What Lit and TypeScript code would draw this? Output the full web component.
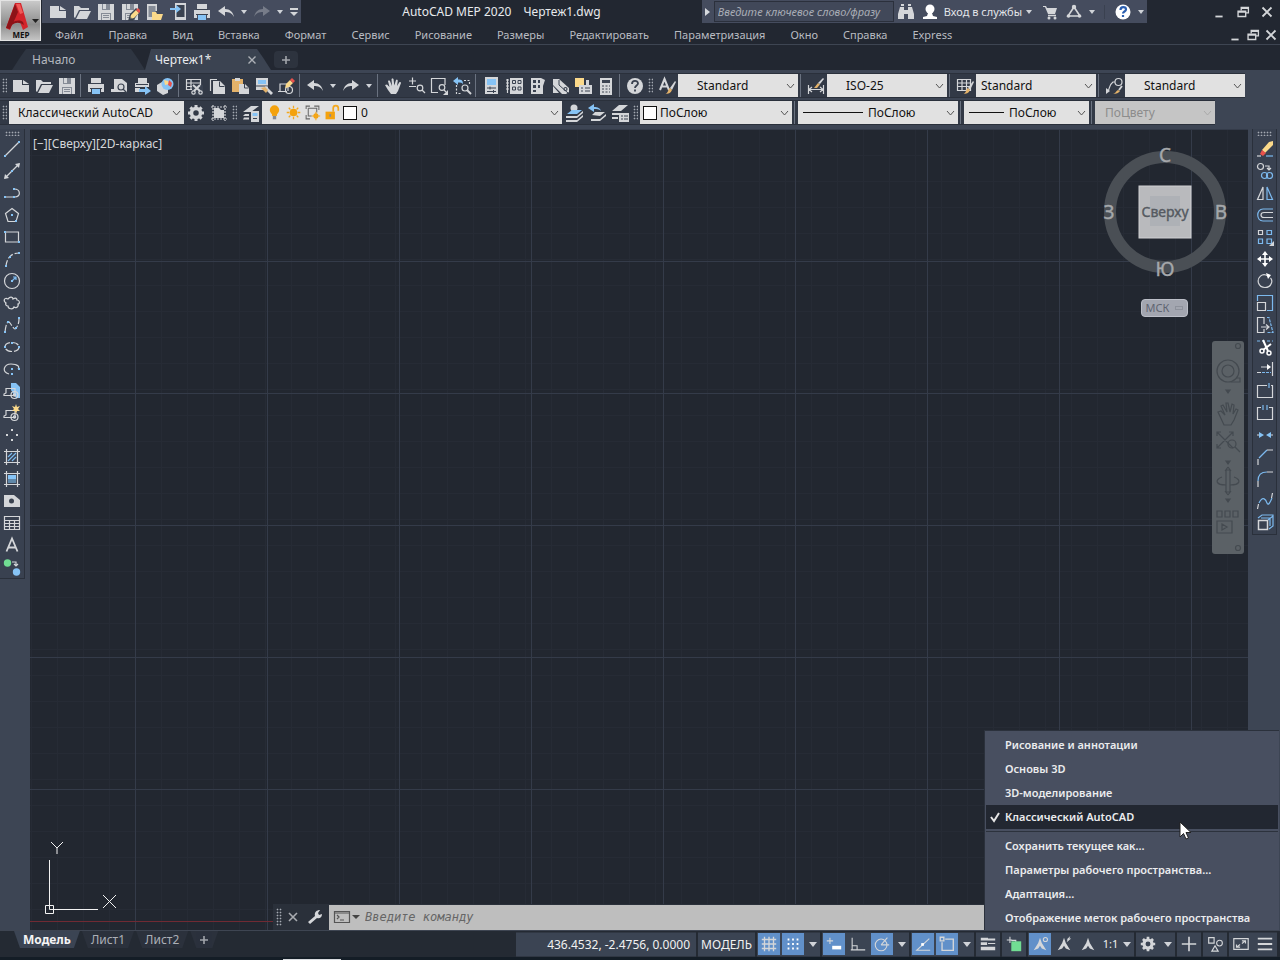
import { LitElement, html, css, svg, nothing, SVGTemplateResult } from "lit";
import { customElement, property } from "lit/decorators.js";
import { classMap } from "lit/directives/class-map.js";

const page = svg`<path class="f" d="M2 4h9v5h7v7H2z"/><path class="f" d="M12 4l6 4h-6z"/>`;
const folder = svg`<path class="f" d="M2 4h5l2 2h8v2h-1V8H7l-4 8-1-1z"/><path class="f" d="M8 9h11l-4 8H4z"/>`;
const floppy = svg`<path class="f" d="M2 2h16v16H2z"/><path class="m" d="M6 2h8v6H6zM5 11h10v7H5z"/><path class="f" d="M7 2h3v5H7zM6 12h8v6H6z"/><path class="d" d="M7 13.500h6M7 15.500h6"/>`;
const pencil = svg`<path class="y" d="M10 17l1-4 5-5 3 3-5 5z"/><path class="r" d="M16 8l2-2 3 3-2 2z"/><path class="k" d="M10 17l.6-2 1.400 1.400z"/>`;
const printer = svg`<path class="f" d="M5 2h10v5H5zM2 8h16v8h-3v-3H5v3H2z"/><path class="k" d="M4 7h12v1H4zM4 12h12v1H4z"/><path class="bf" d="M6 13h8v5H6z"/>`;
const brush = svg`<path class="f" d="M13 12l5-7 1 1-4 8z"/><path class="t" d="M8 18c3 0 3-5 5-6l2 2c-1 3-4 4-7 4z"/>`;
const gear = svg`<circle cx="10" cy="10" r="4.500" stroke-width="3.500"/><path stroke-width="3" d="M10 2v3M10 15v3M2 10h3M15 10h3M4.400 4.400l2 2M13.600 13.600l2 2M4.400 15.600l2-2M13.600 6.400l2-2"/>`;
const layers = svg`<path class="f" d="M2 13h10l6-4h-8zM2 9h10l6-4h-8z"/><path d="M2 16.500h10l5-4"/>`;
const hand = svg`<path class="f" d="M2 9l2-.5L6.500 11 5 5l1-.7L7 5l2 5-.5-7 1-.8 1 .8.8 6.500L13 4l1-.4.8 1L14 10l2.500-4 1 0 .5 1-3 8-2 3H8l-3-4z"/>`;
const block = svg`<path d="M4 7.500h9v7H2V13l2-1z"/><circle cx="12.500" cy="14" r="3.500"/><circle cx="12.500" cy="14" r="1.200"/>`;
const peak = svg`<path class="f" d="M10 3l2 6 5 8-5-2-2-3-2 3-5 2 5-8z"/>`;
const magnifier = svg`<circle cx="13" cy="12" r="3"/><path stroke-width="2" d="M15 14l4 4"/>`;

const ICONS: Record<string, SVGTemplateResult> = {
  page, folder, floppy, printer, gear, hand, peak, layers,
  saveAs: svg`${floppy}<path class="k" d="M8 19l2-7 6-6 4 3-7 10z"/>${pencil}`,
  openMobile: svg`<path class="f" d="M3 2h10v7h-3v9H3z"/><path class="m" d="M4.500 4h7v6h-3v5h-4z"/><path class="y" d="M8 10h4l1 2h6l-2 6H8z"/>`,
  saveMobile: svg`<path class="f" d="M7 1h11v17H7z"/><path class="k" d="M8.500 3h8v12h-8z"/><path class="bf" d="M2 6h6V3l5 4-5 4V8H2z"/>`,
  undo: svg`<path class="f" d="M2 9l7-5v3c5 0 8 3 9 8-2-4-5-5-9-5v4z"/>`,
  redo: svg`<path class="f" d="M18 9l-7-5v3c-5 0-8 3-9 8 2-4 5-5 9-5v4z"/>`,
  customize: svg`<path class="f" d="M6 6h8v2H6zM6 10h8l-4 4z"/>`,
  preview: svg`<path class="f" d="M5 3h8l5 4v9H5z"/><path class="f" d="M2 13h5v3H2z"/><circle class="kk" cx="12" cy="11" r="3"/><path class="kk" d="M14 13l4 4"/>`,
  publish: svg`<path class="f" d="M6 2h9v5H6zM3 7h14v4H3zM3 12h5v4H3z"/><path class="kk" d="M4 8.500h12" stroke-width="1"/><path class="bf" d="M7 13h6v-3l6 5-6 4v-3H7z"/>`,
  globe: svg`<path class="f" d="M2 9l5-3 6 3v8l-5 2-6-4z"/><circle class="bf" cx="12.500" cy="8" r="6"/><path class="y" d="M9 4l4 1 1 3-4 1z"/><path class="r" d="M14 4l3 3-1 4-3-2z"/>`,
  cut: svg`<path d="M2.500 3.500h14v10h-14zM2 7h14M2 10.500h10M7 3v11"/><path class="k" d="M8 9h11v10H8z"/><path class="l" d="M9 9l7 6M16 9l-6 6"/><circle cx="9.500" cy="16.500" r="1.700"/><circle cx="16.500" cy="16.500" r="1.700"/>`,
  copyClip: svg`<path d="M3.500 15V3.500H10"/><path class="f" d="M6 5h7l5 5v8H6z"/><path class="kk" d="M12.500 5.500v5h5" stroke-width="1"/>`,
  paste: svg`<path class="t" d="M2 3h11v5H9v8H2z"/><path class="f" d="M5 2h5v3H5zM9 8h6l4 4v6H9z"/><path class="kk" d="M14.500 8v4h4" stroke-width="1"/>`,
  match: svg`<path class="f" d="M3 2h12v12H3z"/><path class="bf" d="M5 4h8v4H5z"/><path class="kk" d="M3 10h12" stroke-width="1"/><path class="f" d="M11 12l2-2 7 7-2 2z"/><path class="t" d="M8 12l4-1 3 3-2 3z"/>`,
  blockEdit: svg`<path d="M2 15.500h9M4 15V8h8v7"/><circle cx="13" cy="14" r="3.500"/><path class="y" d="M9 12l1-4 4-4 3 3-4 4z"/><path class="r" d="M14 4l2-2 3 3-2 2z"/>`,
  zoom: svg`<path d="M3 5h7M6.500 1.500v7M3 10.500h7"/><circle cx="14" cy="12" r="2.800"/><path d="M16 14l3 3"/>`,
  zoomWindow: svg`<path d="M16 9V2.500H2.500v14H9"/><circle cx="13" cy="11.500" r="2.800"/><path d="M15 14l2 2"/><path class="f" d="M19 14v5h-5z"/>`,
  zoomPrev: svg`<path stroke-dasharray="2 1.500" d="M17.500 8V4.500H12M4.500 9v8.500H10"/><path class="bf" d="M1 5l5-4v2.500c4 0 5 1 5 5-1-2-2-2-5-2V9z"/>${magnifier}`,
  properties: svg`<path class="f" d="M4 1h13v17H4z"/><path class="bf" d="M6 3h9v6H6z"/><path class="kk" d="M6 12h9M6 15.500h9M9 10.500v3M12.500 14v3" stroke-width="1"/>`,
  design: svg`<path d="M3.500 3v14M2 4h3M2 7h3M2 10h3M2 13h3"/><path class="f" d="M6 2h13v16H6z"/><path class="kk" d="M8.500 4.500h3v3h-3zM14 4.500h3v3h-3zM8.500 11h3v3h-3zM14 11h3v3h-3z" stroke-width="1"/>`,
  palettes: svg`<path class="f" d="M4 2h10v16H4zM14 2l4 2-2 6v8h-2z"/><path class="k" d="M6 4h3v3H6zM11 4h2v3h-2zM6 9h3v3H6zM11 9h2v3h-2zM6 14h3v2H6z"/>`,
  sheets: svg`<path class="f" d="M3 3h6L19 12v4l-3 2h-4L3 9z"/><path class="f" d="M3 10l6 7H3z"/><path class="kk" d="M9 4v5l9 8" stroke-width="1"/><circle class="kk" cx="15.500" cy="13" r="1.500"/>`,
  markup: svg`<path class="y" d="M2 2h9v9H2z"/><path class="f" d="M6 9h13v9H6zM13 4h3v5h-3z"/><path class="kk" d="M8 12h2M12 12h5M8 15h2M12 15h5" stroke-width="1"/>`,
  calc: svg`<path class="f" d="M4 2h12v17H4z"/><path class="k" d="M6 4h8v3H6z"/><path class="kk" stroke-dasharray="2 1.500" d="M6 10h8M6 13h8M6 16h8"/>`,
  help: svg`<circle class="f" cx="10" cy="10" r="8"/><path class="kk" stroke-width="1.800" d="M7 8c0-4 6-4 6-.5 0 2-3 2-3 4.500M10 13.500v2"/>`,
  helpBlue: svg`<circle class="w" cx="10" cy="10" r="7.500"/><path stroke="#2c5fb0" stroke-width="2.200" d="M7.500 8c0-4 5.500-3.500 5.500-.5 0 2-3 2-3 4M10 13v2"/>`,
  textStyle: svg`<path stroke-width="2" d="M3 14L7.500 3 12 14M4.500 10.500h6"/>${brush}`,
  dimStyle: svg`<path d="M2.500 9v9M17.500 9v9M3 13.500h14M6 11l-3 2.500L6 16M14 11l3 2.500-3 2.500"/><path class="t" d="M8 12l4-5 2 1.500-3 3.500z"/><path class="f" d="M12 7l5-5 1 1-4 5z"/>`,
  tableStyle: svg`<path d="M2.500 3.500h13v11h-13zM2 7h14M2 10.500h14M7 4v11M11.500 4v11"/>${brush}`,
  leaderStyle: svg`<circle cx="14.500" cy="6" r="3.500"/><path d="M11 6H9c-4 3-3 6-5 9"/><path class="f" d="M2 18l0-6 4 3z"/><path class="t" d="M9 18c2 0 3-3 5-4l2 1c-1 2-4 3-7 3z"/><path stroke-width="1.800" d="M15 14l3-4"/>`,
  gridSet: svg`<path stroke-dasharray="2 1" d="M4 2v16M16 2v16M2 4h16M2 16h16"/><path class="f" d="M5 5h5l2 2h3v8H5z"/>`,
  layerProps: svg`<path class="f" d="M2 9h8l8-6h-8zM2 13h6v-2H4zM2 16.500h6v-2H3z"/><path class="f" d="M10 8h8v11h-8z"/><path class="bf" d="M11.500 10h5v3h-5z"/><path class="kk" d="M12 15.500h4" stroke-width="1"/>`,
  layerCurrent: svg`<circle class="f" cx="10" cy="5" r="3.500"/><path class="bf" d="M3 11l5-4h10l-5 4z"/><path class="f" d="M2 13h11l6-5v2l-6 5H2zM2 17h11l6-5v2l-6 5H2z"/>`,
  layerPrev: svg`<path class="bf" d="M1 5l6-4v3c4 0 6 1 7 4-2-2-4-2-7-2v3z"/><path class="f" d="M5 12l3-3h10l-5 4zM4 16h9l6-5v2l-6 5H4z"/>`,
  layerState: svg`<path class="f" d="M2 8h9l7-6h-9zM2 12h7v-2H2zM2 16h6v-2H2z"/><path class="f" d="M9 10h10v9H9z"/><path class="kk" d="M11 13h2M14 13h4M11 16h2M14 16h4" stroke-width="1"/>`,
  bulb: svg`<circle class="o" cx="10" cy="7" r="5.500"/><path class="o" d="M7 9h6v5H7z"/><path class="m" d="M8 14h4v4H8z"/>`,
  sun: svg`<circle class="o" cx="10" cy="10" r="4.500"/><path stroke="#f4a81d" stroke-width="1.500" d="M10 2v3M10 15v3M2 10h3M15 10h3M4.400 4.400l2 2M13.600 13.600l2 2M4.400 15.600l2-2M13.600 6.400l2-2"/>`,
  freeze: svg`<path stroke="#666" d="M2.500 6V2.500H7M12 2.500h5.500V7M2.500 13v4.500H7M5 5h10v5M5 5v9h4"/><circle class="o" cx="14" cy="14" r="3"/><path stroke="#f4a81d" d="M14 9v10M9 14h10"/>`,
  lock: svg`<path class="o" d="M3 9h11v9H3z"/><path stroke="#f4a81d" stroke-width="2" d="M12 9V5c0-4 6-4 6 0v3"/><path class="m" d="M7.500 12h2v3h-2z"/>`,
  binoculars: svg`<path class="f" d="M4 5h4v3h4V5h4l2 7v5h-6v-5H8v5H2v-5zM5 2h3v2H5zM12 2h3v2h-3z"/>`,
  user: svg`<circle class="w" cx="10" cy="7" r="4.500"/><path class="w" d="M8 11h4l1 3 4 1v2H3v-2l4-1z"/>`,
  cart: svg`<path class="f" d="M3 4h3l1 2h10l-2 6H8L5 5H3z"/><path stroke-width="1.500" d="M8 13.500h8"/><circle class="f" cx="9" cy="16" r="1.500"/><circle class="f" cx="15" cy="16" r="1.500"/>`,
  share: svg`<path stroke-width="1.600" d="M10 5L4 14h12z"/><circle class="f" cx="10" cy="5" r="2.200"/><circle class="f" cx="4.500" cy="14" r="1.800"/><circle class="f" cx="15.500" cy="14" r="1.800"/>`,
  minimize: svg`<path class="l" d="M6 15h8"/>`,
  restore: svg`<path stroke-width="1.500" d="M8 8V5h8v6h-3M4.500 9h8.500v6H4.500zM8 6h8M5 10h8"/>`,
  close: svg`<path class="l" d="M5 5l10 10M15 5L5 15"/>`,
  plus: svg`<path class="l" d="M10 5v10M5 10h10"/>`,
  line: svg`<path d="M3 17L17 3"/><path class="bf" d="M2 16h2v2H2zM16 2h2v2h-2z"/>`,
  xline: svg`<path d="M3 17L17 3"/><path class="f" d="M2 18l1-5 4 4zM18 2l-1 5-4-4z"/><path class="bf" d="M9 9h2v2H9z"/>`,
  pline: svg`<path d="M3 14h9M12 6c7 0 7 8 1 8"/><path class="bf" d="M2 13h2v2H2zM11 13h2v2h-2zM11 5h2v2h-2z"/>`,
  polygon: svg`<path d="M10 3.500l6.500 5-2.500 8H6l-2.500-8z"/><path class="bf" d="M9 9h2v2H9zM13 15h2v2h-2z"/>`,
  rect: svg`<path d="M3.500 5h13v10h-13z"/><path class="bf" d="M2 4h2v2H2zM16 14h2v2h-2z"/>`,
  arc: svg`<path stroke-dasharray="6 2" d="M4 17C5 8 10 4 17 4"/><path class="bf" d="M3 16h2v2H3zM7 7h2v2H7zM16 3h2v2h-2z"/>`,
  circle: svg`<circle cx="10" cy="10" r="7.500"/><path class="b" d="M10 10l4-4M11 6h3v3"/><path class="bf" d="M9 9h2v2H9z"/>`,
  cloud: svg`<path d="M4 10c-3-2-2-6 2-4 2-3 5-2 5 0 3-2 4 0 4 1 3 0 3 4 1 4 1 4-3 4-4 3-1 3-6 2-6-1-2 0-3-2-2-3z"/>`,
  spline: svg`<path stroke-dasharray="7 2" d="M3 17C4 8 6 5 8 8s4 6 5 6 4-4 4-10"/><path class="bf" d="M2 16h2v2H2zM5 6h2v2H5zM13 12h2v2h-2zM16 2h2v2h-2z"/>`,
  ellipse: svg`<ellipse cx="10" cy="10" rx="7" ry="4.500" stroke-dasharray="7 2"/><path class="bf" d="M2 9h2v2H2zM16 9h2v2h-2zM9 5h2v2H9z"/>`,
  ellipseArc: svg`<path d="M7 15C-1 13 2 5 9 5s9 3 7 5"/><path class="bf" d="M9 9h2v2H9zM16 9h2v2h-2zM9 14h2v2H9z"/>`,
  insertBlock: svg`<path class="bf" d="M9 2h5l4 4v11h-4L9 9z"/>${block}`,
  makeBlock: svg`${block}<path class="y" d="M14 1l1 3 3-1-2 3 2 2-3 0-1 3-1-3-3 0 2-2-2-3 3 1z"/>`,
  point: svg`<path class="f" d="M9 4h2v2H9zM9 14h2v2H9zM4 9h2v2H4zM14 9h2v2h-2z"/>`,
  hatch: svg`<path d="M4.500 2v16M15.500 2v16M2 4.500h16M2 15.500h16"/><path class="b" d="M6 10l4-4M6 14l8-8M10 14l4-4"/>`,
  gradient: svg`<path d="M4.500 2v16M15.500 2v16M2 4.500h16M2 15.500h16"/><path class="bf" d="M6 6h8v5H6z"/><path fill="#5f87a8" stroke="none" d="M6 10h8v4H6z"/>`,
  region: svg`<path class="f" d="M2 4h10l6 5v7H2z"/><circle class="k" cx="9.500" cy="10" r="2.500"/>`,
  table: svg`<path d="M2.500 3.500h15v13h-15zM2 7.500h16M2 10.500h16M2 13.500h16M7.500 7v10M12.500 7v10"/>`,
  mtext: svg`<path stroke-width="1.800" d="M4.500 16.500L10 3.500l5.500 13M6.500 12.500h7"/>`,
  addSelected: svg`<circle class="g" cx="5.500" cy="6" r="3.700"/><circle class="bf" cx="14.500" cy="15" r="3.700"/><path d="M10 5h4v4M12 7l2 2 2-2"/>`,
  erase: svg`<path class="y" d="M7 11l7-8 4-1v4l-8 8z"/><path class="r" d="M7 11l4 3-3 3-3-2z"/><path d="M2 17h4"/><path class="b" d="M11 17h7"/>`,
  copy: svg`<circle cx="5.500" cy="5.500" r="3"/><path d="M10 5h4v4M12 7l2 2 2-2"/><circle class="b" cx="9.500" cy="14.500" r="3"/><circle class="b" cx="14.500" cy="14.500" r="3"/>`,
  mirror: svg`<path d="M8 4v12.500H2.500z"/><path class="b" d="M12 4v12.500h5.500z"/>`,
  offset: svg`<path class="b" d="M18 4H8C1 4 1 16 8 16h10"/><path d="M18 7.500H9c-4 0-4 5 0 5h9"/>`,
  array: svg`<path d="M3.500 3.500h4v4h-4z"/><path class="b" d="M12 3.500h4.500v4H12zM3.500 12h4v4.500h-4zM12 12h4.500v4.500H12z"/><path class="f" d="M19 14v5h-5z"/>`,
  move: svg`<path stroke="#fff" stroke-width="1.600" d="M10 4v12M4 10h12"/><path class="w" d="M10 2l3 4H7zM10 18l3-4H7zM2 10l4-3v6zM18 10l-4-3v6z"/>`,
  rotate: svg`<path d="M13 5C7 1 2 7 3.500 12c2 6 11 6 13 0 .7-2 0-4-1-5"/><path class="w" d="M11 2l5 2-3 4z"/>`,
  scale: svg`<path class="b" d="M2.500 8V2.500h15v15H12"/><path d="M2.500 9.500h8v8h-8z"/>`,
  stretch: svg`<path d="M9 9V2.500H2.500v15H9V14M6 12h7M11 9.500l3 2.500-3 2.500"/><path class="b" stroke-dasharray="3 1" d="M12 2.500l2 0 4 15h-6"/>`,
  trim: svg`<path class="b" stroke-dasharray="3 2" d="M2 4h16"/><path stroke="#fff" stroke-width="2" d="M8 3l5 11M16 7l-8 6"/><circle class="wl" cx="7" cy="14" r="2"/><circle class="wl" cx="14" cy="16" r="2"/>`,
  extend: svg`<path d="M6 8h8M17.500 3v14M2 13.500h4"/><path class="w" d="M12 5l4 3-4 3z"/><path class="b" stroke-dasharray="3 1" d="M7 13.500h9"/>`,
  breakPoint: svg`<path d="M12 4.500H2.500v12h15v-12H16"/><path class="b" d="M14 2v5"/>`,
  breakGap: svg`<path d="M6 4.500H2.500v12h15v-12H14"/><path class="b" d="M8 2v5M12 2v5"/>`,
  join: svg`<path d="M2 10h4M14 10h4"/><path class="bf" d="M4 7l5 3-5 3zM16 7l-5 3 5 3z"/>`,
  chamfer: svg`<path class="b" d="M4 11l8-8"/><path d="M12 3h6M3 12v6"/>`,
  fillet: svg`<path class="b" d="M3 12c0-6 3-9 9-9"/><path d="M12 3h6M3 12v6"/>`,
  blend: svg`<path class="b" d="M4 12C8 4 11 9 12 12s3 0 5-5"/><path d="M2.500 18l1-5M17.500 2l-1 5"/>`,
  explode: svg`<path d="M3.500 7.500h9v9h-9z" stroke-width="1.500"/><path class="b" d="M3 5l4-3h11v11l-4 3M13 7l5-4M6 5h9v8"/>`,
  wrench: svg`<path class="f" d="M3 15l7-6c-1-4 2-6 5-6l-2 3 1 2 3-1c0 4-3 5-5 4l-7 6z"/>`,
  prompt: svg`<path stroke="#555" d="M2.500 4.500h15v11h-15zM2 6h16M5 8l2 2-2 2M8 13h4"/>`,
  gridOn: svg`<path stroke-width="1.500" d="M5 2v16M10 2v16M15 2v16M2 5h16M2 10h16M2 15h16"/>`,
  snap: svg`<path class="w" d="M4 4h2v2H4zM9 4h2v2H9zM14 4h2v2h-2zM4 9h2v2H4zM9 9h2v2H9zM14 9h2v2h-2zM4 14h2v2H4zM9 14h2v2H9zM14 14h2v2h-2z"/>`,
  dyn: svg`<path d="M5.500 3v7M2 6.500h7"/><path class="w" d="M8 12h10v4H8z"/>`,
  ortho: svg`<path d="M3.500 3v14M2 16.500h16M4 12h5v4"/>`,
  polar: svg`<circle cx="9" cy="11" r="6.500"/><path d="M9 11h9M9 11l7-8"/>`,
  track: svg`<path d="M18 17H3L17 4"/><path class="w" d="M8 9h3v3H8z"/>`,
  osnap: svg`<path stroke-width="1.500" d="M8 4.500h9v12.500H4.500V8M2.500 2.500h4v4h-4z"/>`,
  lineweight: svg`<path class="f" d="M2 3h8v1h8v2H2zM2 8h7v3H2zM10 9h8v1h-8zM2 13h16v4H2z"/>`,
  transparency: svg`<path d="M5.500 2v7M2 5.500h6M7 6h5v5"/><path class="g" d="M7 7h11v11H7z"/>`,
  annotate: svg`${peak}<circle cx="16" cy="5" r="2.300"/>`,
  autoscale: svg`${peak}<path class="f" d="M13 8l1-3-1 0 4-4-1 3 2 0z"/>`,
  bigPlus: svg`<path stroke-width="1.800" d="M10 2v16M2 10h16"/>`,
  isolate: svg`<path stroke-width="1.300" d="M3 3h6v6H3zM10 12l3.500 6h-7z"/><circle cx="15" cy="9" r="3.200"/>`,
  fullscreen: svg`<path stroke-width="1.300" d="M2 4h16v12H2zM11 6.500h4v3M9 13.500H5v-3M15 6.500l-4 3M5 13.500l4-3"/>`,
  burger: svg`<path class="l" d="M2 4h16M2 10h16M2 16h16"/>`,
};

@customElement("cad-icon")
export class CadIcon extends LitElement {
  @property() name = "";

  static styles = css`
    :host { display: block; width: 20px; height: 20px; flex: none; }
    svg { display: block; width: 100%; height: 100%; fill: none; stroke: #d4d6d9; stroke-width: 1.2; }
    .f { fill: #d4d6d9; stroke: none; }
    .w { fill: #fff; stroke: none; }
    .wl { stroke: #fff; stroke-width: 1.5; }
    .m { fill: #858b96; stroke: none; }
    .d { stroke: #858b96; }
    .k { fill: #3a4250; stroke: none; }
    .kk { stroke: #3a4250; }
    .l { stroke-width: 2; }
    .b { stroke: #7cb9ee; }
    .bf { fill: #86c3f5; stroke: none; }
    .o { fill: #f4a20d; stroke: none; }
    .t { fill: #e3b26a; stroke: none; }
    .y { fill: #fbd98a; stroke: none; }
    .r { fill: #e9524c; stroke: none; }
    .g { fill: #71dd93; stroke: none; }
  `;

  render() {
    return html`<svg viewBox="0 0 20 20" aria-hidden="true">${ICONS[this.name] ?? nothing}</svg>`;
  }
}

type Tool = [icon: string, label: string];

const MENU = ["Файл", "Правка", "Вид", "Вставка", "Формат", "Сервис", "Рисование", "Размеры", "Редактировать", "Параметризация", "Окно", "Справка", "Express"];

const DRAW: Tool[] = [
  ["line", "Отрезок"], ["xline", "Прямая"], ["pline", "Полилиния"], ["polygon", "Многоугольник"], ["rect", "Прямоугольник"],
  ["arc", "Дуга"], ["circle", "Круг"], ["cloud", "Облако"], ["spline", "Сплайн"], ["ellipse", "Эллипс"],
  ["ellipseArc", "Эллиптическая дуга"], ["insertBlock", "Вставить блок"], ["makeBlock", "Создать блок"], ["point", "Точка"],
  ["hatch", "Штриховка"], ["gradient", "Градиент"], ["region", "Область"], ["table", "Таблица"], ["mtext", "Текст"], ["addSelected", "Добавить выбранное"],
];

const MODIFY: Tool[] = [
  ["erase", "Стереть"], ["copy", "Копировать"], ["mirror", "Зеркало"], ["offset", "Подобие"], ["array", "Массив"],
  ["move", "Перенести"], ["rotate", "Повернуть"], ["scale", "Масштаб"], ["stretch", "Растянуть"], ["trim", "Обрезать"],
  ["extend", "Удлинить"], ["breakPoint", "Разорвать в точке"], ["breakGap", "Разорвать"], ["join", "Соединить"],
  ["chamfer", "Фаска"], ["fillet", "Сопряжение"], ["blend", "Плавное соединение"], ["explode", "Расчленить"],
];

const STANDARD: Tool[][] = [
  [["page", "Создать"], ["folder", "Открыть"], ["floppy", "Сохранить"]],
  [["printer", "Печать"], ["preview", "Просмотр"], ["publish", "Публикация"], ["globe", "3D-печать"]],
  [["cut", "Вырезать"], ["copyClip", "Копировать"], ["paste", "Вставить"], ["match", "Копирование свойств"], ["blockEdit", "Редактор блоков"]],
  [["undo", "Отменить"], ["caret", "Список отмены"], ["redo", "Повторить"], ["caret", "Список повтора"]],
  [["hand", "Панорамирование"], ["zoom", "Зумирование"], ["zoomWindow", "Рамка"], ["zoomPrev", "Предыдущий"]],
  [["properties", "Свойства"], ["design", "Центр управления"], ["palettes", "Палитры"], ["sheets", "Подшивки"], ["markup", "Пометки"], ["calc", "Калькулятор"]],
  [["help", "Справка"]],
];

const WORKSPACES = ["Рисование и аннотации", "Основы 3D", "3D-моделирование", "Классический AutoCAD"];
const WORKSPACE_ACTIONS = ["Сохранить текущее как...", "Параметры рабочего пространства...", "Адаптация...", "Отображение меток рабочего пространства"];

interface StatusTool { icon: string; label: string; on?: boolean; text?: string }

const STATUS: StatusTool[][] = [
  [{ icon: "gridOn", label: "Сетка", on: true }, { icon: "snap", label: "Шаг", on: true }, { icon: "caret", label: "Режимы шага" }],
  [{ icon: "dyn", label: "Динамический ввод", on: true }, { icon: "ortho", label: "Орто" }, { icon: "polar", label: "Полярное отслеживание", on: true }, { icon: "caret", label: "Углы" }],
  [{ icon: "track", label: "Отслеживание", on: true }, { icon: "osnap", label: "Привязка", on: true }, { icon: "caret", label: "Виды привязки" }],
  [{ icon: "lineweight", label: "Вес линий" }],
  [{ icon: "transparency", label: "Прозрачность" }],
  [{ icon: "annotate", label: "Видимость аннотаций", on: true }, { icon: "autoscale", label: "Автомасштаб" }, { icon: "peak", label: "Масштаб аннотаций" }, { icon: "", label: "Масштаб", text: "1:1" }],
  [{ icon: "gear", label: "Рабочее пространство" }, { icon: "caret", label: "Список пространств" }],
  [{ icon: "bigPlus", label: "Монитор аннотаций" }],
  [{ icon: "isolate", label: "Изоляция объектов" }],
  [{ icon: "fullscreen", label: "Очистить экран" }, { icon: "burger", label: "Адаптация" }],
];

@customElement("app-root")
export class AppRoot extends LitElement {
  static styles = css`
    :host {
      display: flex; flex-direction: column; position: relative; min-height: 100vh; overflow: hidden;
      background: #222731; color: #c6c9cf;
      font: 12px/16px "Noto Sans", "Open Sans", sans-serif;
    }
    * { box-sizing: border-box; }
    button, input, select { font: inherit; color: inherit; background: none; border: 0; padding: 0; margin: 0; border-radius: 0; outline: 0; }
    button { display: flex; align-items: center; justify-content: center; white-space: nowrap; }
    .caret { width: 0; height: 0; border: 3px solid transparent; border-top: 4px solid #d0d3d8; border-bottom: 0; }

    .head { display: grid; grid-template-columns: 42px 1fr; height: 45px; border-bottom: 1px solid #3e4552; }
    .logo { width: 41px; height: 41px; background: linear-gradient(#c9c9c9, #8d8d8d 60%, #c4c4c4); border: 1px solid #e4e4e4; }
    .logo svg { width: 39px; height: 39px; }
    .titlebar { display: flex; height: 23px; }
    .strip { display: flex; align-items: center; background: #454c5e; }
    .quick { padding-left: 4px; }
    .quick button { width: 24px; height: 23px; }
    .quick .drop { width: 12px; }
    .quick .last { width: 15px; }
    .dim { opacity: 0.35; }
    .title { flex: 1; display: flex; justify-content: center; align-items: center; gap: 12px; color: #e8eaed; }
    .search { width: 180px; height: 21px; padding: 0 3px; border: 1px solid #2b303c; background: #414859; font-size: 11px; }
    .search::placeholder { color: #a9adb6; font-style: italic; opacity: 1; }
    .right-arrow { border: 4px solid transparent; border-left: 5px solid #d7dade; border-right: 0; }
    .info button { height: 23px; width: 24px; }
    .info .signin { width: auto; color: #e3e5e9; gap: 4px; padding: 0 6px 0 2px; font-size: 11px; }
    .info .drop { width: 12px; }
    .info .vline { width: 1px; height: 14px; background: #3a4150; margin: 0 6px; }
    .window { display: flex; justify-content: flex-end; }
    .window.top { width: 133px; padding-right: 1px; }
    .window button { width: 24px; height: 23px; }
    .window.sub { margin-left: auto; }
    .window.sub button { width: 18px; height: 22px; }
    .window cad-icon { width: 18px; height: 18px; }
    .menubar { display: flex; align-items: center; height: 22px; padding-top: 2px; }
    .menus { display: flex; gap: 25px; padding-left: 13px; font-size: 11px; }
    .menus button { color: #b9bcc2; }

    .files { display: flex; align-items: flex-end; height: 25px; padding: 0 12px; }
    .file { display: flex; align-items: center; height: 21px; background: #2e3541; color: #b4b8bf; padding: 0 20px; width: 133px; justify-content: flex-start; clip-path: polygon(0 100%, 8px 40%, 14px 0, 119px 0, 125px 40%, 133px 100%); }
    .file.on { background: #3b4351; color: #e9ebee; padding: 0 12px 0 10px; justify-content: space-between; width: 126px; clip-path: polygon(0 100%, 6px 0, 112px 0, 118px 40%, 126px 100%); }
    .file cad-icon { width: 14px; height: 14px; opacity: 0.75; }
    .add { width: 24px; height: 17px; background: #2d333e; border-radius: 4px; margin: 0 0 2px 3px; }
    .add cad-icon { width: 16px; height: 16px; opacity: 0.7; }

    .bars { background: #3d4554; padding: 2px 0 3px; }
    .bar { display: flex; height: 27px; align-items: center; }
    .panel { display: flex; align-items: center; height: 25px; background: #323946; border: 1px solid #2a303b; border-width: 1px 0; }
    .grip { width: 5px; height: 15px; margin: 0 2px; background: radial-gradient(circle, #a4a9b2 40%, transparent 50%) 0 0 / 3px 3px; }
    .tool { width: 23px; height: 23px; }
    .tool.drop { width: 13px; }
    .sep { width: 1px; height: 23px; background: #6a7280; margin: 0 3px 0 2px; }
    .combo { display: grid; align-items: center; height: 23px; background: #e1e1e1; color: #111; }
    .combo > * { grid-area: 1 / 1; }
    .combo select { appearance: none; width: 100%; height: 23px; padding: 0 20px 0 5px; opacity: 1; }
    .combo .chev { justify-self: end; width: 9px; height: 6px; margin-right: 3px; fill: none; stroke: #555; pointer-events: none; }
    .combo .deco { display: flex; align-items: center; padding-left: 3px; pointer-events: none; }
    .combo .deco cad-icon { width: 19px; height: 17px; }
    .combo.indent select { padding-left: 19px; }
    .combo.ws select { padding-left: 9px; }
    .combo.layer select { padding-left: 99px; }
    .combo.color select { padding-left: 20px; }
    .combo.type select { padding-left: 70px; }
    .combo.weight select { padding-left: 45px; }
    .combo.off { background: #c5c5c5; color: #8c8c8c; }
    .combo.off select { padding-left: 10px; }
    .combo.off .chev { stroke: #aaa; }
    .swatch { width: 14px; height: 14px; border: 1px solid #111; background: #fff; }
    .layer .swatch { margin-left: 2px; }
    .stroke { height: 1px; background: #111; margin-left: 2px; }
    .w120 { width: 120px; } .w175 { width: 175px; } .w300 { width: 300px; } .w150 { width: 152px; }
    .w160 { width: 160px; } .w125 { width: 125px; } .stroke.long { width: 60px; } .stroke.short { width: 35px; }

    .work { flex: 1; display: grid; grid-template-columns: 30px 1fr 32px; background: #3d4554; }
    .dock { align-self: start; width: 25px; display: flex; flex-direction: column; align-items: center; background: #394150; border: 1px solid #2a303b; border-top: 0; }
    .dock.left { border-left: 0; }
    .dock.right { margin-left: 4px; }
    .dock .grip { width: 15px; height: 5px; margin: 2px 0; }
    .dock button { width: 22px; height: 22px; }
    .canvas {
      position: relative; background-color: #222730;
      background-image: linear-gradient(90deg, #343b49 1px, transparent 1px), linear-gradient(#343b49 1px, transparent 1px),
        linear-gradient(90deg, #262b35 1px, transparent 1px), linear-gradient(#262b35 1px, transparent 1px);
      background-size: 132px 132px, 132px 132px, 26px 26px, 26px 26px;
      background-position: 105px 0;
    }
    .axis { position: absolute; left: 0; bottom: 8px; width: 244px; height: 1px; background: #702a33; }
    .view { position: absolute; left: 3px; top: 7px; display: flex; color: #d4d6da; }
    .cube { position: absolute; right: 18px; top: 16px; width: 130px; height: 136px; font-size: 19px; overflow: visible; }
    .cube text { fill: #a5a8ab; text-anchor: middle; stroke: #a5a8ab; stroke-width: 0.4; }
    .cube .face { fill: #555a61; stroke: #555a61; font-size: 14px; }
    .ucs { position: absolute; right: 60px; top: 170px; width: 47px; height: 18px; border-radius: 4px; background: #a3a6b0; border: 1px solid #bcbfc8; color: #5f6470; gap: 6px; font-size: 11px; }
    .ucs i { width: 8px; height: 4px; border: 1px solid #8d919b; }
    .nav { position: absolute; right: 4px; top: 212px; width: 32px; height: 213px; border-radius: 3px; background: #5b6166; }
    .nav svg { width: 32px; height: 213px; fill: none; stroke: #444a50; stroke-width: 1.2; }
    .origin { position: absolute; left: 14px; bottom: 14px; width: 76px; height: 76px; fill: none; stroke: #f2f2f2; }
    .command { position: absolute; left: 243px; right: 0; bottom: 0; height: 26px; display: flex; align-items: center; background: #2a303a; }
    .command .grip { height: 18px; width: 6px; margin: 0 3px; }
    .command button { width: 28px; height: 26px; }
    .command .quit { width: 16px; }
    .command .entry { flex: 1; display: flex; align-items: center; height: 25px; background: #bebebe; }
    .command .entry button { width: 34px; }
    .command .entry .caret { border-top-color: #444; border-width: 4px 4px 0; }
    .command input { flex: 1; height: 25px; padding-left: 2px; color: #333; font: italic 12px "DejaVu Sans Mono", monospace; }
    .command input::placeholder { color: #666; opacity: 1; }
    .command .cross { width: 16px; height: 16px; opacity: 0.75; }

    .foot { display: flex; justify-content: space-between; height: 30px; border-top: 1px solid #3e4552; border-bottom: 3px solid #141d26; background: #242a33; }
    .layouts { display: flex; padding-left: 14px; }
    .layouts button { height: 17px; padding: 0 9px; background: #2b313c; clip-path: polygon(0 0, 100% 0, calc(100% - 6px) 100%, 6px 100%); margin-right: 2px; color: #abafb7; }
    .layouts .on { background: #3b4453; color: #f4f4f4; font-weight: 700; }
    .layouts .more { padding: 0 6px; }
    .layouts .more cad-icon { width: 16px; height: 16px; opacity: 0.7; }
    .status { display: flex; gap: 2px; padding: 1px 3px 0 0; }
    .group { display: flex; height: 25px; background: #3b4453; border: 1px solid #303743; border-width: 1px 0; color: #f1f1f1; }
    .coords { width: 180px; justify-content: flex-end; align-items: center; padding-right: 6px; }
    .model { width: 57px; }
    .status .t { width: 22px; height: 22px; margin: 0 1px; }
    .status .t cad-icon { width: 18px; height: 18px; }
    .status .t.on { background: #6190c9; }
    .status .t.drop { width: 13px; }
    .status .t.drop .caret, .status .scale .caret { border-width: 5px 4px 0; }
    .status .t.scale { width: 32px; gap: 5px; font-size: 11px; }
    .task { position: absolute; left: 283px; bottom: 0; width: 58px; height: 1px; background: #d9dcdf; }

    .popup { position: absolute; right: 1px; bottom: 30px; width: 295px; padding: 2px 1px 0; background: #484f60; border: solid #2b313c; border-width: 1px 0 0 1px; color: #ebecee; font-size: 11px; font-weight: 600; }
    .popup button { position: relative; width: 100%; height: 24px; padding-left: 19px; justify-content: flex-start; }
    .popup .on { background: #222731; }
    .popup hr { height: 1px; border: 0; margin: 2px 0; background: #2c323d; }
    .popup .tick { position: absolute; left: 3px; top: 6px; width: 12px; height: 12px; fill: none; stroke: #e6e6e6; stroke-width: 2; }
    .pointer { position: absolute; left: 194px; top: 90px; width: 14px; height: 20px; }
  `;

  private tool([icon, label]: Tool) {
    return icon === "caret"
      ? html`<button class="tool drop" aria-label=${label}><span class="caret"></span></button>`
      : html`<button class="tool" aria-label=${label}><cad-icon name=${icon}></cad-icon></button>`;
  }

  private combo(label: string, value: string, cls: string, deco: unknown = nothing, disabled = false) {
    return html`<div class="combo ${cls}">
      <select aria-label=${label} ?disabled=${disabled}><option>${value}</option></select>
      ${deco === nothing ? nothing : html`<span class="deco">${deco}</span>`}
      <svg class="chev" viewBox="0 0 9 6"><path d="M1 1l3.500 4L8 1"/></svg>
    </div>`;
  }

  private windowButtons(cls: string) {
    return html`<div class="window ${cls}">
      <button aria-label="Свернуть"><cad-icon name="minimize"></cad-icon></button>
      <button aria-label="Восстановить"><cad-icon name="restore"></cad-icon></button>
      <button aria-label="Закрыть"><cad-icon name="close"></cad-icon></button>
    </div>`;
  }

  private header() {
    const quick: Tool[] = [["page", "Создать"], ["folder", "Открыть"], ["floppy", "Сохранить"], ["saveAs", "Сохранить как"], ["openMobile", "Открыть с устройства"], ["saveMobile", "Сохранить на устройство"], ["printer", "Печать"], ["undo", "Отменить"]];
    return html`<header class="head">
      <button class="logo" aria-label="Меню приложения">
        <svg viewBox="0 0 39 39">
          <path fill="#d3242b" d="M5 27L14 2h6l7 24-5 3-3-8c-4-1-6 0-8 2l-2 6z"/>
          <path fill="#8d1318" d="M14 3l3 8-3 7-5 10-4-1zM11 22c4-3 8-3 11-1l1 3c-5-3-8-3-12 0z"/>
          <path fill="#ef5a58" d="M15 3h4l3 9-3 1z"/>
          <path fill="#222" d="M31 18h7l-3.500 4z"/>
          <text x="20" y="37" font-size="8" font-weight="700" text-anchor="middle" fill="#111">MEP</text>
        </svg>
      </button>
      <div>
        <div class="titlebar">
          <div class="strip quick">
            ${quick.map(([i, l]) => html`<button aria-label=${l}><cad-icon name=${i}></cad-icon></button>`)}
            <button class="drop" aria-label="Список отмены"><span class="caret"></span></button>
            <button class="dim" aria-label="Повторить"><cad-icon name="redo"></cad-icon></button>
            <button class="drop" aria-label="Список повтора"><span class="caret"></span></button>
            <button class="last" aria-label="Адаптация панели"><cad-icon name="customize"></cad-icon></button>
          </div>
          <div class="title"><span>AutoCAD MEP 2020</span><span>Чертеж1.dwg</span></div>
          <div class="strip info">
            <button class="drop" aria-label="Свернуть поиск"><span class="right-arrow"></span></button>
            <input class="search" aria-label="Поиск" placeholder="Введите ключевое слово/фразу">
            <button aria-label="Найти"><cad-icon name="binoculars"></cad-icon></button>
            <button class="signin"><cad-icon name="user"></cad-icon>Вход в службы<span class="caret"></span></button>
            <button aria-label="Магазин"><cad-icon name="cart"></cad-icon></button>
            <button aria-label="Обмен"><cad-icon name="share"></cad-icon></button>
            <button class="drop" aria-label="Меню обмена"><span class="caret"></span></button>
            <span class="vline"></span>
            <button aria-label="Справка"><cad-icon name="helpBlue"></cad-icon></button>
            <button class="drop" aria-label="Меню справки"><span class="caret"></span></button>
          </div>
          ${this.windowButtons("top")}
        </div>
        <div class="menubar">
          <nav class="menus">${MENU.map((m) => html`<button>${m}</button>`)}</nav>
          ${this.windowButtons("sub")}
        </div>
      </div>
    </header>`;
  }

  private toolbars() {
    return html`<div class="bars">
      <div class="bar">
        <div class="panel"><span class="grip"></span>
          ${STANDARD.map((g, i) => html`${i ? html`<span class="sep"></span>` : nothing}${g.map((t) => this.tool(t))}`)}
        </div>
        <div class="panel"><span class="grip"></span>
          ${this.tool(["textStyle", "Текстовые стили"])}${this.combo("Текстовый стиль", "Standard", "indent w120")}
          <span class="sep"></span>${this.tool(["dimStyle", "Размерные стили"])}${this.combo("Размерный стиль", "ISO-25", "indent w120")}
          <span class="sep"></span>${this.tool(["tableStyle", "Стили таблиц"])}${this.combo("Стиль таблиц", "Standard", "w120")}
          <span class="sep"></span>${this.tool(["leaderStyle", "Стили выносок"])}${this.combo("Стиль выносок", "Standard", "indent w120")}
        </div>
      </div>
      <div class="bar">
        <div class="panel"><span class="grip"></span>
          ${this.combo("Рабочее пространство", "Классический AutoCAD", "ws w175")}
          ${this.tool(["gear", "Параметры"])}${this.tool(["gridSet", "Мое пространство"])}
        </div>
        <div class="panel"><span class="grip"></span>
          ${this.tool(["layerProps", "Свойства слоя"])}
          ${this.combo("Слой", "0", "layer w300", html`<cad-icon name="bulb"></cad-icon><cad-icon name="sun"></cad-icon><cad-icon name="freeze"></cad-icon><cad-icon name="lock"></cad-icon><span class="swatch"></span>`)}
          ${this.tool(["layerCurrent", "Сделать текущим"])}${this.tool(["layerPrev", "Предыдущий слой"])}${this.tool(["layerState", "Состояния слоев"])}
        </div>
        <div class="panel"><span class="grip"></span>
          ${this.combo("Цвет", "ПоСлою", "color w150", html`<span class="swatch"></span>`)}<span class="sep"></span>
          ${this.combo("Тип линий", "ПоСлою", "type w160", html`<span class="stroke long"></span>`)}<span class="sep"></span>
          ${this.combo("Вес линий", "ПоСлою", "weight w125", html`<span class="stroke short"></span>`)}<span class="sep"></span>
          ${this.combo("Стиль печати", "ПоЦвету", "off w120", nothing, true)}
        </div>
      </div>
    </div>`;
  }

  private dock(tools: Tool[], cls: string) {
    return html`<div class="dock ${cls}"><span class="grip"></span>
      ${tools.map(([i, l]) => html`<button aria-label=${l}><cad-icon name=${i}></cad-icon></button>`)}
    </div>`;
  }

  private canvas() {
    return html`<main class="canvas">
      <div class="axis"></div>
      <div class="view"><button>[−]</button><button>[Сверху]</button><button>[2D-каркас]</button></div>
      <svg class="cube" viewBox="0 0 130 136">
        <circle cx="65" cy="67" r="55" fill="none" stroke="#4a4f55" stroke-width="12"/>
        <rect x="39" y="41" width="52" height="52" fill="#b9babd" stroke="#cfd0d2"/>
        <rect x="50" y="51" width="30" height="30" fill="#aeb1b6"/>
        <text x="65" y="17">С</text><text x="65" y="131">Ю</text><text x="9" y="74">З</text><text x="121" y="74">В</text>
        <text class="face" x="65" y="72">Сверху</text>
      </svg>
      <button class="ucs">МСК<i></i></button>
      <div class="nav">
        <svg viewBox="0 0 32 213">
          <circle cx="26" cy="5" r="2.500"/><circle cx="26" cy="207" r="2.500"/>
          <circle cx="16" cy="30" r="11"/><circle cx="16" cy="30" r="6"/><path d="M24 37h4v4h-9"/>
          <path d="M14 49h4l-2 3zM14 120h4l-2 3zM14 158h4l-2 3z" fill="#444a50"/>
          <path d="M6 71l3-1 4 4-4-9 2-1 4 7-1-9h2l2 9 2-8 2 1-1 9 3-5 2 1-4 10-3 5h-7z"/>
          <path d="M5 91l16 16M21 91L5 107M5 95v-4h4M17 91h4v4M5 103v4h4"/><circle cx="20" cy="103" r="4"/><path d="M23 106l5 5"/>
          <path d="M14 129h4v22h-4zM16 126l3 4M16 126l-3 4M16 154l3-4M16 154l-3-4"/><path d="M10 136c-8 3-6 8 4 8M22 136c8 3 6 8-4 8"/>
          <path d="M5 170h5v6H5zM13 170h5v6h-5zM21 170h5v6h-5zM5 180h15v12H5zM10 183l5 3-5 3z"/>
        </svg>
      </div>
      <svg class="origin" viewBox="0 0 76 76">
        <path d="M5.500 20v45M10 69.500h44M1.500 65.500h8v8h-8zM5.500 65v4.500h5"/>
        <path d="M7 2l6 6 6-6M13 8v6M59 55l13 13M72 55L59 68"/>
      </svg>
      <div class="command">
        <span class="grip"></span>
        <button class="quit" aria-label="Закрыть"><cad-icon class="cross" name="close"></cad-icon></button>
        <button aria-label="Адаптация"><cad-icon name="wrench"></cad-icon></button>
        <div class="entry">
          <button aria-label="Последние команды"><cad-icon name="prompt"></cad-icon><span class="caret"></span></button>
          <input aria-label="Командная строка" placeholder="Введите команду">
        </div>
      </div>
    </main>`;
  }

  private statusTool(t: StatusTool) {
    const drop = t.icon === "caret";
    const cls = { t: true, on: !!t.on, drop, scale: !!t.text };
    return html`<button class=${classMap(cls)} aria-label=${t.label}>
      ${t.text ? html`<span>${t.text}</span><span class="caret"></span>` : drop ? html`<span class="caret"></span>` : html`<cad-icon name=${t.icon}></cad-icon>`}
    </button>`;
  }

  render() {
    return html`
      ${this.header()}
      <div class="files">
        <button class="file">Начало</button>
        <button class="file on">Чертеж1*<cad-icon name="close"></cad-icon></button>
        <button class="add" aria-label="Новый чертеж"><cad-icon name="plus"></cad-icon></button>
      </div>
      ${this.toolbars()}
      <div class="work">
        ${this.dock(DRAW, "left")}
        ${this.canvas()}
        ${this.dock(MODIFY, "right")}
      </div>
      <footer class="foot">
        <div class="layouts">
          <button class="on">Модель</button><button>Лист1</button><button>Лист2</button>
          <button class="more" aria-label="Новый лист"><cad-icon name="plus"></cad-icon></button>
        </div>
        <div class="status">
          <div class="group coords">436.4532, -2.4756, 0.0000</div>
          <button class="group model">МОДЕЛЬ</button>
          ${STATUS.map((g) => html`<div class="group">${g.map((t) => this.statusTool(t))}</div>`)}
        </div>
      </footer>
      <div class="task"></div>
      <div class="popup" role="menu">
        ${WORKSPACES.map((w, i) => html`<button role="menuitemradio" aria-checked=${i === 3} class=${classMap({ on: i === 3 })}>
          ${i === 3 ? html`<svg class="tick" viewBox="0 0 12 12"><path d="M2 6l3 4 5-8"/></svg>` : nothing}${w}</button>`)}
        <hr>
        ${WORKSPACE_ACTIONS.map((w) => html`<button role="menuitem">${w}</button>`)}
        <svg class="pointer" viewBox="0 0 14 20"><path d="M1 1v15l3.500-3.500L7 18l2.500-1L7 11.500h5z" fill="#fff" stroke="#222"/></svg>
      </div>`;
  }
}
